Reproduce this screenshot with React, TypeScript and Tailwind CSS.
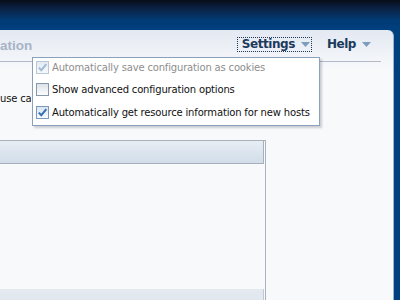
import React from "react";

type CheckState = "checked" | "unchecked" | "disabled";

const Checkbox = ({ state }: { state: CheckState }) => {
  const box =
    state === "disabled"
      ? "border-[#b9c7d6] bg-[linear-gradient(to_bottom,#e4ebf3,#f6f9fc)]"
      : state === "checked"
        ? "border-[#7a98b8] bg-[linear-gradient(to_bottom,#d9e5f2,#f7fafd)]"
        : "border-[#8797aa] bg-[linear-gradient(to_bottom,#dde2e9,#fbfcfd)]";

  return (
    <span className={`grid size-[13px] shrink-0 place-items-center border ${box}`}>
      {state !== "unchecked" && (
        <svg width="11" height="11" viewBox="0 0 11 11">
          <path
            d="M1.8 5.6 L4.3 8.2 L9.3 2.2"
            fill="none"
            stroke={state === "disabled" ? "#a3bad3" : "#3470b4"}
            strokeWidth="2"
          />
        </svg>
      )}
    </span>
  );
};

const Caret = () => (
  <svg width="9" height="5" viewBox="0 0 9 5" className="ml-[6px] shrink-0">
    <path d="M0 0 H9 L4.5 5 Z" fill="#7d9bbd" />
  </svg>
);

const options: { label: string; state: CheckState; gap: string }[] = [
  { label: "Automatically save configuration as cookies", state: "disabled", gap: "mt-0" },
  { label: "Show advanced configuration options", state: "unchecked", gap: "mt-[9px]" },
  { label: "Automatically get resource information for new hosts", state: "checked", gap: "mt-[10px]" },
];

const App = () => {
  return (
    <div className="flex h-[300px] w-[400px] flex-col overflow-hidden bg-[linear-gradient(to_bottom,#070d18_0px,#0b2347_9px,#023a74_20px,#00407f_30px)] pr-[6px] pt-[30px] font-['DejaVu_Sans',sans-serif]">
      <div className="relative flex-1 rounded-tr-[6px] border-r border-[#9fb4cc] bg-[linear-gradient(to_bottom,#e3e9f2_0px,#f3f5f9_30px,#f8f9fb_40px)]">
        <header className="mr-[12px] flex h-[32px] items-start justify-between border-b border-[#b3bbc7] pt-[7px]">
          <h1 className="mt-[1px] font-['Liberation_Sans',sans-serif] text-[13.5px] font-bold leading-[16px] text-[#a7b3c6]">
            ation
          </h1>
          <nav className="flex items-center pr-[10px]">
            <button
              type="button"
              className="flex h-[15px] items-center border border-dotted border-[#1d3651] pl-[4px] pr-[1px] text-[12px] font-bold leading-[13px] tracking-[-0.45px] text-[#1b3a5c]"
            >
              Settings
              <Caret />
            </button>
            <button
              type="button"
              className="ml-[15px] flex h-[15px] items-center text-[12px] font-bold leading-[13px] tracking-[-0.45px] text-[#1b3a5c]"
            >
              Help
              <Caret />
            </button>
          </nav>
        </header>

        <p className="mt-[31px] w-[31px] overflow-hidden whitespace-nowrap text-[10px] leading-[12px] tracking-[-0.17px] text-[#111]">
          use ca
        </p>

        <section className="mt-[35px] w-[266px] border-r border-t border-[#a9b1bd]">
          <div className="mr-[1px] h-[23px] border-b border-r border-[#a7afbb] bg-[linear-gradient(to_bottom,#e7edf3,#d1dde8)]" />
          <div className="h-[125px]" />
          <div className="mr-[1px] h-[20px] border-r border-[#c3cad3] bg-[linear-gradient(to_bottom,#e5eaf1,#dfe5ed)]" />
        </section>

        <div className="absolute left-[32px] top-[27px] w-[288px] border border-[#8aa1bc] bg-white pb-[6px] pl-[3px] pt-[3px] shadow-[2px_2px_2px_rgba(60,70,90,0.25)]">
          {options.map((option) => (
            <label key={option.label} className={`flex items-center gap-[3px] ${option.gap}`}>
              <Checkbox state={option.state} />
              <span
                className={`whitespace-nowrap text-[10px] leading-[13px] tracking-[-0.17px] ${
                  option.state === "disabled" ? "text-[#8e8e8e]" : "text-[#111]"
                }`}
              >
                {option.label}
              </span>
            </label>
          ))}
        </div>
      </div>
    </div>
  );
};

export default App;
